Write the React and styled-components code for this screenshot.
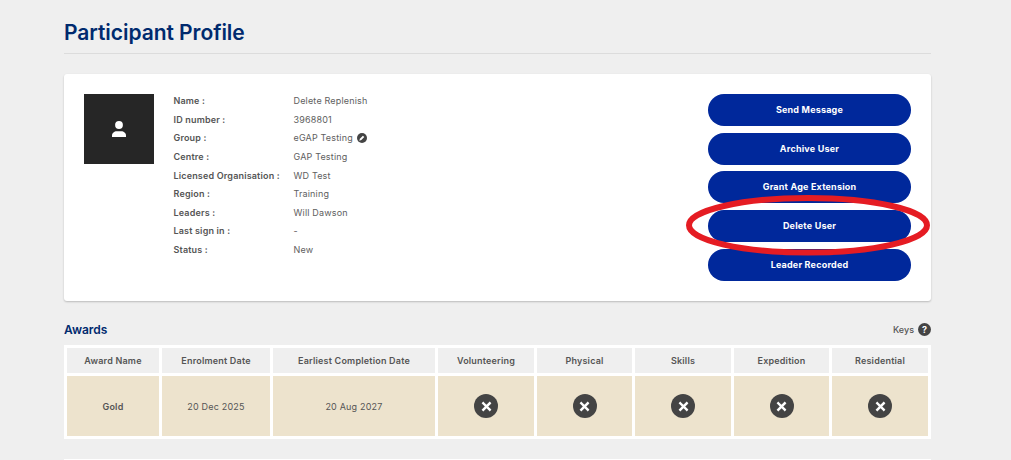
import React from 'react'
import styled, { createGlobalStyle } from 'styled-components'

const GlobalStyle = createGlobalStyle`
  html, body {
    margin: 0;
    height: 460px;
    overflow: hidden;
    background: #efefef;
    font-family: Inter, "Liberation Sans", sans-serif;
  }
`

const Page = styled.div`
  width: 867px;
  margin-left: 64px;
`

const Header = styled.div`
  height: 53px;
  border-bottom: 1px solid #dcdcdc;
  box-sizing: content-box;
`

const Title = styled.h1`
  margin: 0;
  padding-top: 19px;
  font-size: 21px;
  line-height: 27px;
  font-weight: 600;
  letter-spacing: -0.05px;
  color: #002a6e;
`

const ProfileCard = styled.section`
  position: relative;
  box-sizing: border-box;
  height: 227px;
  margin-top: 20px;
  padding: 20px;
  display: flex;
  background: #fff;
  border-radius: 3px;
  box-shadow: 0 1px 2px rgba(0, 0, 0, 0.22);
`

const Avatar = styled.div`
  width: 70px;
  height: 70px;
  flex: none;
  display: flex;
  align-items: center;
  justify-content: center;
  background: #262626;
`

const Details = styled.dl`
  margin: -2.75px 0 0 19.5px;
  display: grid;
  grid-template-columns: 120px 1fr;
  grid-auto-rows: 18.63px;
  flex: 1;
  align-items: center;
  align-content: start;
  font-size: 9px;
  letter-spacing: 0.17px;
`

const Label = styled.dt`
  font-weight: 600;
  color: #555;
`

const Value = styled.dd`
  margin: 0;
  display: flex;
  align-items: center;
  gap: 4.5px;
  color: #5e5e5e;
`

const Actions = styled.div`
  width: 203px;
  flex: none;
  display: flex;
  flex-direction: column;
  gap: 6.7px;
`

const ActionButton = styled.button`
  height: 32px;
  flex: none;
  padding: 0 0 1px;
  border: 0;
  border-radius: 16px;
  background: #00289b;
  color: #fff;
  font-family: inherit;
  font-size: 9px;
  font-weight: 700;
  letter-spacing: 0.2px;
`

const Highlight = styled.svg`
  position: absolute;
  left: 622px;
  top: 120px;
  width: 245px;
  height: 64px;
  pointer-events: none;
`

const SectionHead = styled.div`
  margin-top: 16px;
  height: 28px;
  padding-bottom: 4px;
  box-sizing: border-box;
  display: flex;
  align-items: center;
  justify-content: space-between;
`

const SectionTitle = styled.h2`
  margin: 0;
  font-size: 12px;
  font-weight: 600;
  color: #002a6e;
`

const Keys = styled.div`
  display: flex;
  align-items: center;
  gap: 4px;
  font-size: 9px;
  font-weight: 500;
  color: #555;
`

const KeyBadge = styled.span`
  width: 13px;
  height: 13px;
  border-radius: 50%;
  display: flex;
  align-items: center;
  justify-content: center;
  background: #444;
  color: #fff;
  font-size: 9px;
  font-weight: 700;
`

const AwardTable = styled.table`
  width: 867px;
  table-layout: fixed;
  border-collapse: separate;
  border-spacing: 3px;
  background: #fff;
`

const HeadCell = styled.th`
  height: 25px;
  padding: 0;
  background: #efefef;
  color: #555;
  font-size: 9px;
  font-weight: 600;
  letter-spacing: 0.2px;
  text-align: center;
`

const Cell = styled.td`
  height: 60px;
  padding: 0;
  background: #ede3cd;
  color: #555;
  font-size: 9px;
  font-weight: ${(p) => (p.$bold ? 600 : 400)};
  letter-spacing: 0.2px;
  text-align: center;
`

const StatusIcon = styled.span`
  width: 24px;
  height: 24px;
  margin: 0 auto;
  border-radius: 50%;
  display: flex;
  align-items: center;
  justify-content: center;
  background: #444;
`

const NextCard = styled.div`
  margin-top: 20px;
  height: 20px;
  background: #fff;
`

const UserIcon = () => (
  <svg width="14" height="16" viewBox="0 0 14 16" fill="#fff">
    <circle cx="7" cy="4" r="3.9" />
    <path d="M0 16v-1.600C0 12 2.500 10.300 4.500 10.300h5c2 0 4.500 1.700 4.500 4.100V16z" />
  </svg>
)

const EditIcon = () => (
  <svg width="10" height="10" viewBox="0 0 10 10">
    <circle cx="5" cy="5" r="5" fill="#444" />
    <path d="M2.300 7.700l.6-2 3-3 1.400 1.400-3 3z" fill="#fff" />
  </svg>
)

const CrossIcon = () => (
  <svg width="11" height="11" viewBox="0 0 11 11" stroke="#fff" strokeWidth="2.400" strokeLinecap="square">
    <path d="M2.300 2.300l6.400 6.400M8.700 2.300l-6.400 6.400" />
  </svg>
)

const profile = [
  ['Name :', 'Delete Replenish'],
  ['ID number :', '3968801'],
  ['Group :', 'eGAP Testing', true],
  ['Centre :', 'GAP Testing'],
  ['Licensed Organisation :', 'WD Test'],
  ['Region :', 'Training'],
  ['Leaders :', 'Will Dawson'],
  ['Last sign in :', '-'],
  ['Status :', 'New'],
]

const actions = ['Send Message', 'Archive User', 'Grant Age Extension', 'Delete User', 'Leader Recorded']

const columns = [
  ['Award Name', 92],
  ['Enrolment Date', 108],
  ['Earliest Completion Date', 162],
  ['Volunteering', 96],
  ['Physical', 95],
  ['Skills', 96],
  ['Expedition', 95],
  ['Residential', 96],
]

export default function App() {
  return (
    <Page>
      <GlobalStyle />
      <Header>
        <Title>Participant Profile</Title>
      </Header>

      <ProfileCard>
        <Avatar>
          <UserIcon />
        </Avatar>
        <Details>
          {profile.map(([label, value, editable]) => (
            <React.Fragment key={label}>
              <Label>{label}</Label>
              <Value>
                {value}
                {editable && <EditIcon />}
              </Value>
            </React.Fragment>
          ))}
        </Details>
        <Actions>
          {actions.map((a) => (
            <ActionButton key={a}>{a}</ActionButton>
          ))}
        </Actions>
        <Highlight viewBox="0 0 245 64">
          <ellipse cx="122" cy="31.300" rx="119" ry="27.300" fill="none" stroke="#e51c23" strokeWidth="6" />
        </Highlight>
      </ProfileCard>

      <SectionHead>
        <SectionTitle>Awards</SectionTitle>
        <Keys>
          Keys
          <KeyBadge>?</KeyBadge>
        </Keys>
      </SectionHead>

      <AwardTable>
        <colgroup>
          {columns.map(([name, width]) => (
            <col key={name} style={{ width }} />
          ))}
        </colgroup>
        <thead>
          <tr>
            {columns.map(([name]) => (
              <HeadCell key={name}>{name}</HeadCell>
            ))}
          </tr>
        </thead>
        <tbody>
          <tr>
            <Cell $bold>Gold</Cell>
            <Cell>20 Dec 2025</Cell>
            <Cell>20 Aug 2027</Cell>
            {columns.slice(3).map(([name]) => (
              <Cell key={name}>
                <StatusIcon>
                  <CrossIcon />
                </StatusIcon>
              </Cell>
            ))}
          </tr>
        </tbody>
      </AwardTable>

      <NextCard />
    </Page>
  )
}
